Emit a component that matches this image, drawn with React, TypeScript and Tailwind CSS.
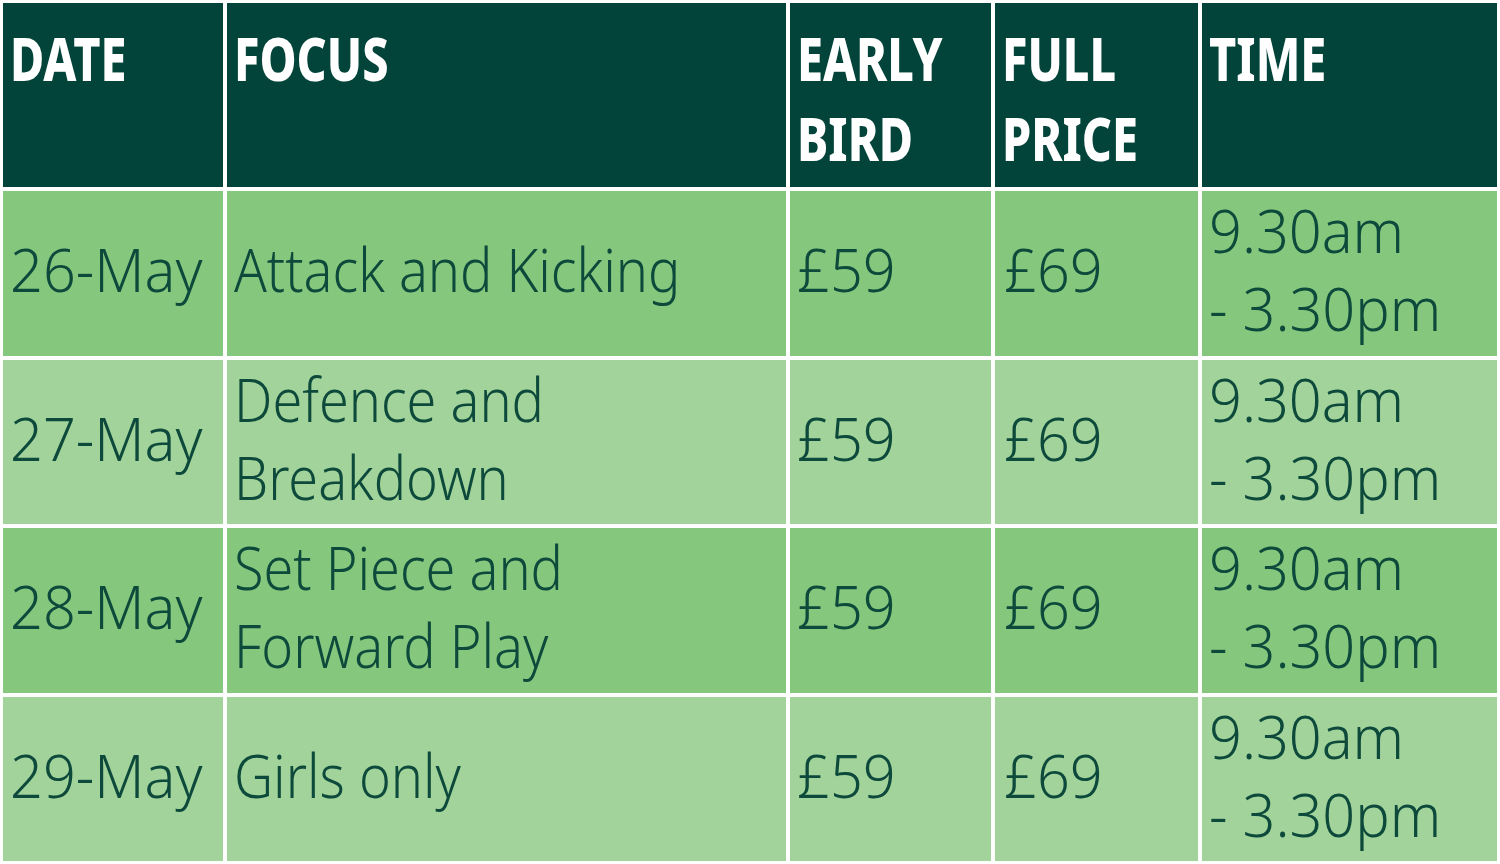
import React from "react";

const rows = [
  { date: "26-May", focus: ["Attack and Kicking"], early: "£59", full: "£69", bg: "bg-[#86c77e]" },
  { date: "27-May", focus: ["Defence and", "Breakdown"], early: "£59", full: "£69", bg: "bg-[#a2d39a]" },
  { date: "28-May", focus: ["Set Piece and", "Forward Play"], early: "£59", full: "£69", bg: "bg-[#86c77e]" },
  { date: "29-May", focus: ["Girls only"], early: "£59", full: "£69", bg: "bg-[#a2d39a]" },
];

const headers = [["DATE"], ["FOCUS"], ["EARLY", "BIRD"], ["FULL", "PRICE"], ["TIME"]];

// the source typeface is condensed; squeeze the installed one to match
function Lines({ lines, squeeze }: { lines: string[]; squeeze: string }) {
  return (
    <div className="flex flex-col">
      {lines.map((l) => (
        <span key={l} className={`inline-block origin-left whitespace-nowrap ${squeeze}`}>
          {l}
        </span>
      ))}
    </div>
  );
}

const cell = "flex items-center pb-[8px] text-[60px] leading-[78px] font-light text-[#0d4a3b]";
const words = "scale-x-[0.9]";
const figures = "scale-x-[0.96]";

export default function App() {
  return (
    <div className="h-[864px] w-[1500px] bg-white p-[3px] font-['Noto_Sans','DejaVu_Sans',sans-serif]">
      <div className="grid h-full grid-cols-[220px_559px_201px_203px_1fr] grid-rows-[184px_repeat(4,1fr)] gap-[4px]">
        {headers.map((h) => (
          <div
            key={h[0]}
            className="bg-[#03443a] pl-[7px] pt-[15px] text-[60px] font-extrabold leading-[80px] text-white"
          >
            <Lines lines={h} squeeze="scale-x-[0.78]" />
          </div>
        ))}
        {rows.map((r) => (
          <React.Fragment key={r.date}>
            <div className={`${r.bg} ${cell} pl-[7px]`}>
              <Lines lines={[r.date]} squeeze={figures} />
            </div>
            <div className={`${r.bg} ${cell} pl-[7px]`}>
              <Lines lines={r.focus} squeeze={words} />
            </div>
            <div className={`${r.bg} ${cell} pl-[7px]`}>
              <Lines lines={[r.early]} squeeze={figures} />
            </div>
            <div className={`${r.bg} ${cell} pl-[9px]`}>
              <Lines lines={[r.full]} squeeze={figures} />
            </div>
            <div className={`${r.bg} ${cell} pl-[7px]`}>
              <Lines lines={["9.30am", "- 3.30pm"]} squeeze={figures} />
            </div>
          </React.Fragment>
        ))}
      </div>
    </div>
  );
}
